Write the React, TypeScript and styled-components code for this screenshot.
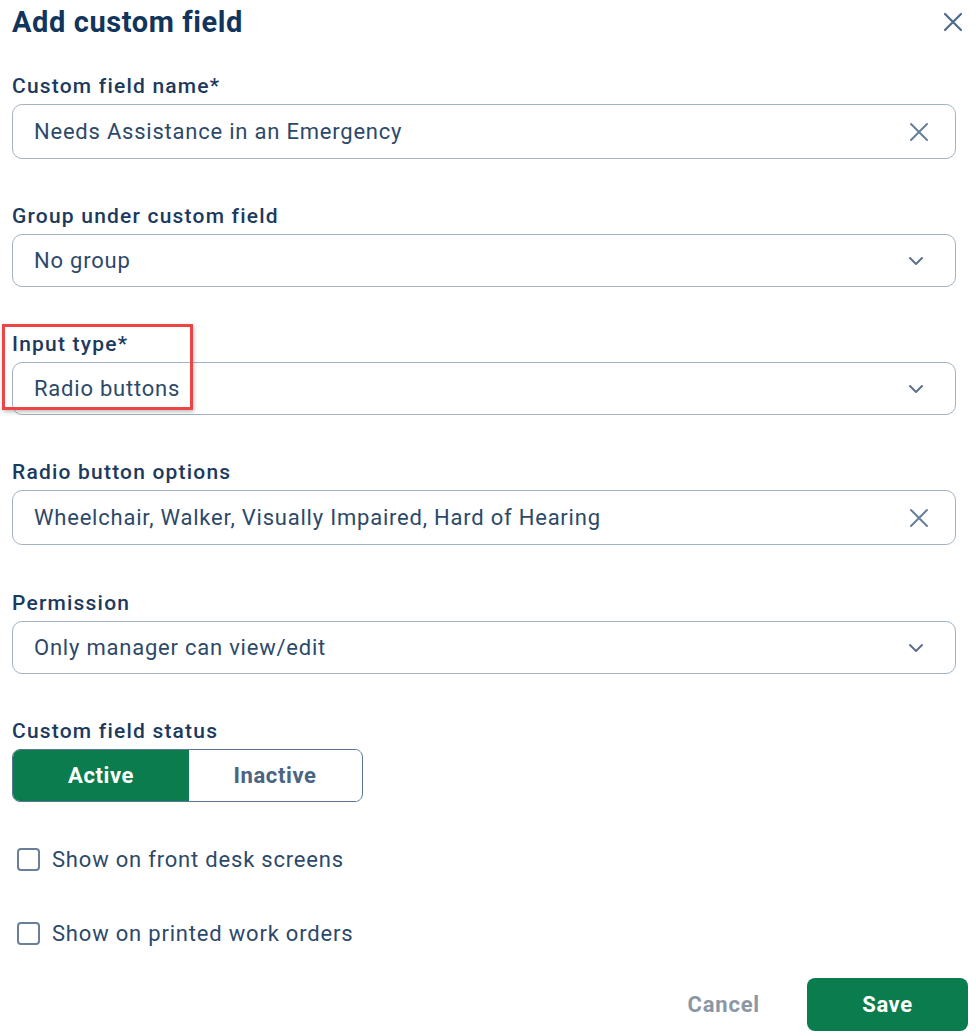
import styled, { createGlobalStyle } from 'styled-components';

const Global = createGlobalStyle`
  body {
    margin: 0;
    background: #ffffff;
    font-family: Roboto, "Liberation Sans", Arial, sans-serif;
  }
`;

const Dialog = styled('div')`
  width: 976px;
  height: 1036px;
  box-sizing: border-box;
  padding: 1px 8px 0 12px;
  display: flex;
  flex-direction: column;
`;

const Header = styled('div')`
  display: flex;
  align-items: center;
  justify-content: space-between;
  height: 42px;
  margin-bottom: 31px;
`;

const Title = styled('h1')`
  margin: 0;
  font-size: 29px;
  font-weight: 700;
  color: #12355b;
  letter-spacing: 0.6px;
`;

const CloseBtn = styled('button')`
  border: none;
  background: none;
  padding: 0;
  width: 24px;
  height: 24px;
  margin-right: 3px;
  display: flex;
  align-items: center;
  justify-content: center;
  cursor: pointer;
`;

const Field = styled('div')<{ $gap?: number }>`
  position: relative;
  display: flex;
  flex-direction: column;
  gap: 6px;
  width: 944px;
  margin-bottom: ${(p) => p.$gap ?? 45}px;
`;

const Label = styled('label')`
  font-size: 21px;
  font-weight: 500;
  color: #1c3a5e;
  line-height: 24px;
  letter-spacing: 1.2px;
`;

const Box = styled('div')<{ $tall?: boolean }>`
  height: ${(p) => (p.$tall ? 55 : 53)}px;
  box-sizing: border-box;
  border: 1.5px solid #a3b3c6;
  border-radius: 10px;
  display: flex;
  align-items: center;
  justify-content: space-between;
  padding: 0 26px 0 21px;
  font-size: 22px;
  letter-spacing: 0.78px;
  color: #2d4969;
`;

const ChevronWrap = styled('span')`
  display: flex;
  margin-right: 5px;
`;

const Highlight = styled('div')`
  position: absolute;
  left: -10px;
  top: -8px;
  width: 191px;
  height: 86px;
  box-sizing: border-box;
  border: 3px solid #ec4545;
  box-shadow: 1px 2px 4px rgba(0, 0, 0, 0.25);
  pointer-events: none;
`;

const Segmented = styled('div')`
  display: flex;
  width: 351px;
  height: 53px;
  box-sizing: border-box;
  border: 1.5px solid #5d7594;
  border-radius: 8px;
  overflow: hidden;
`;

const Segment = styled('div')<{ $active?: boolean; $w: number }>`
  width: ${(p) => p.$w}px;
  display: flex;
  align-items: center;
  justify-content: center;
  font-size: 22px;
  font-weight: 700;
  letter-spacing: 0.6px;
  background: ${(p) => (p.$active ? '#0a7c4d' : '#ffffff')};
  color: ${(p) => (p.$active ? '#ffffff' : '#4a6482')};
`;

const Checks = styled('div')`
  display: flex;
  flex-direction: column;
  gap: 46px;
  margin-top: 43px;
`;

const CheckRow = styled('label')`
  display: flex;
  align-items: center;
  gap: 12px;
  margin-left: 5px;
  font-size: 22px;
  letter-spacing: 0.8px;
  color: #2d4969;
  height: 28px;
`;

const Check = styled('span')`
  width: 23px;
  height: 23px;
  box-sizing: border-box;
  border: 2px solid #6a8099;
  border-radius: 4px;
`;

const Footer = styled('div')`
  display: flex;
  justify-content: flex-end;
  align-items: center;
  gap: 47px;
  margin-top: 31px;
`;

const Cancel = styled('button')`
  border: none;
  background: none;
  font-family: inherit;
  font-size: 22px;
  font-weight: 700;
  letter-spacing: 0.8px;
  color: #8b97a4;
  padding: 0;
`;

const Save = styled('button')`
  width: 161px;
  height: 53px;
  border: none;
  border-radius: 8px;
  background: #0a7c4d;
  color: #ffffff;
  font-family: inherit;
  font-size: 22px;
  font-weight: 700;
  letter-spacing: 0.6px;
`;

const Clear = () => (
  <svg width="20" height="20" viewBox="0 0 20 20">
    <path d="M2 2 L18 18 M18 2 L2 18" stroke="#667f99" strokeWidth="2" strokeLinecap="round" />
  </svg>
);

const Chevron = () => (
  <ChevronWrap>
    <svg width="16" height="10" viewBox="0 0 16 10">
      <path d="M2 2 L8 8 L14 2" stroke="#5b718a" strokeWidth="2" fill="none" strokeLinecap="round" strokeLinejoin="round" />
    </svg>
  </ChevronWrap>
);

export default function App() {
  return (
    <>
      <Global />
      <Dialog>
        <Header>
          <Title>Add custom field</Title>
          <CloseBtn aria-label="close">
            <svg width="20" height="20" viewBox="0 0 20 20">
              <path d="M2 2 L18 18 M18 2 L2 18" stroke="#4f6b88" strokeWidth="2.2" strokeLinecap="round" />
            </svg>
          </CloseBtn>
        </Header>

        <Field $gap={45}>
          <Label>Custom field name*</Label>
          <Box $tall>
            Needs Assistance in an Emergency
            <Clear />
          </Box>
        </Field>

        <Field>
          <Label>Group under custom field</Label>
          <Box>
            No group
            <Chevron />
          </Box>
        </Field>

        <Field $gap={45}>
          <Highlight />
          <Label>Input type*</Label>
          <Box>
            Radio buttons
            <Chevron />
          </Box>
        </Field>

        <Field $gap={46}>
          <Label>Radio button options</Label>
          <Box $tall>
            Wheelchair, Walker, Visually Impaired, Hard of Hearing
            <Clear />
          </Box>
        </Field>

        <Field $gap={45}>
          <Label>Permission</Label>
          <Box>
            Only manager can view/edit
            <Chevron />
          </Box>
        </Field>

        <Field $gap={0}>
          <Label>Custom field status</Label>
          <Segmented>
            <Segment $active $w={176}>Active</Segment>
            <Segment $w={172}>Inactive</Segment>
          </Segmented>
        </Field>

        <Checks>
          <CheckRow>
            <Check />
            Show on front desk screens
          </CheckRow>
          <CheckRow>
            <Check />
            Show on printed work orders
          </CheckRow>
        </Checks>

        <Footer>
          <Cancel>Cancel</Cancel>
          <Save>Save</Save>
        </Footer>
      </Dialog>
    </>
  );
}
